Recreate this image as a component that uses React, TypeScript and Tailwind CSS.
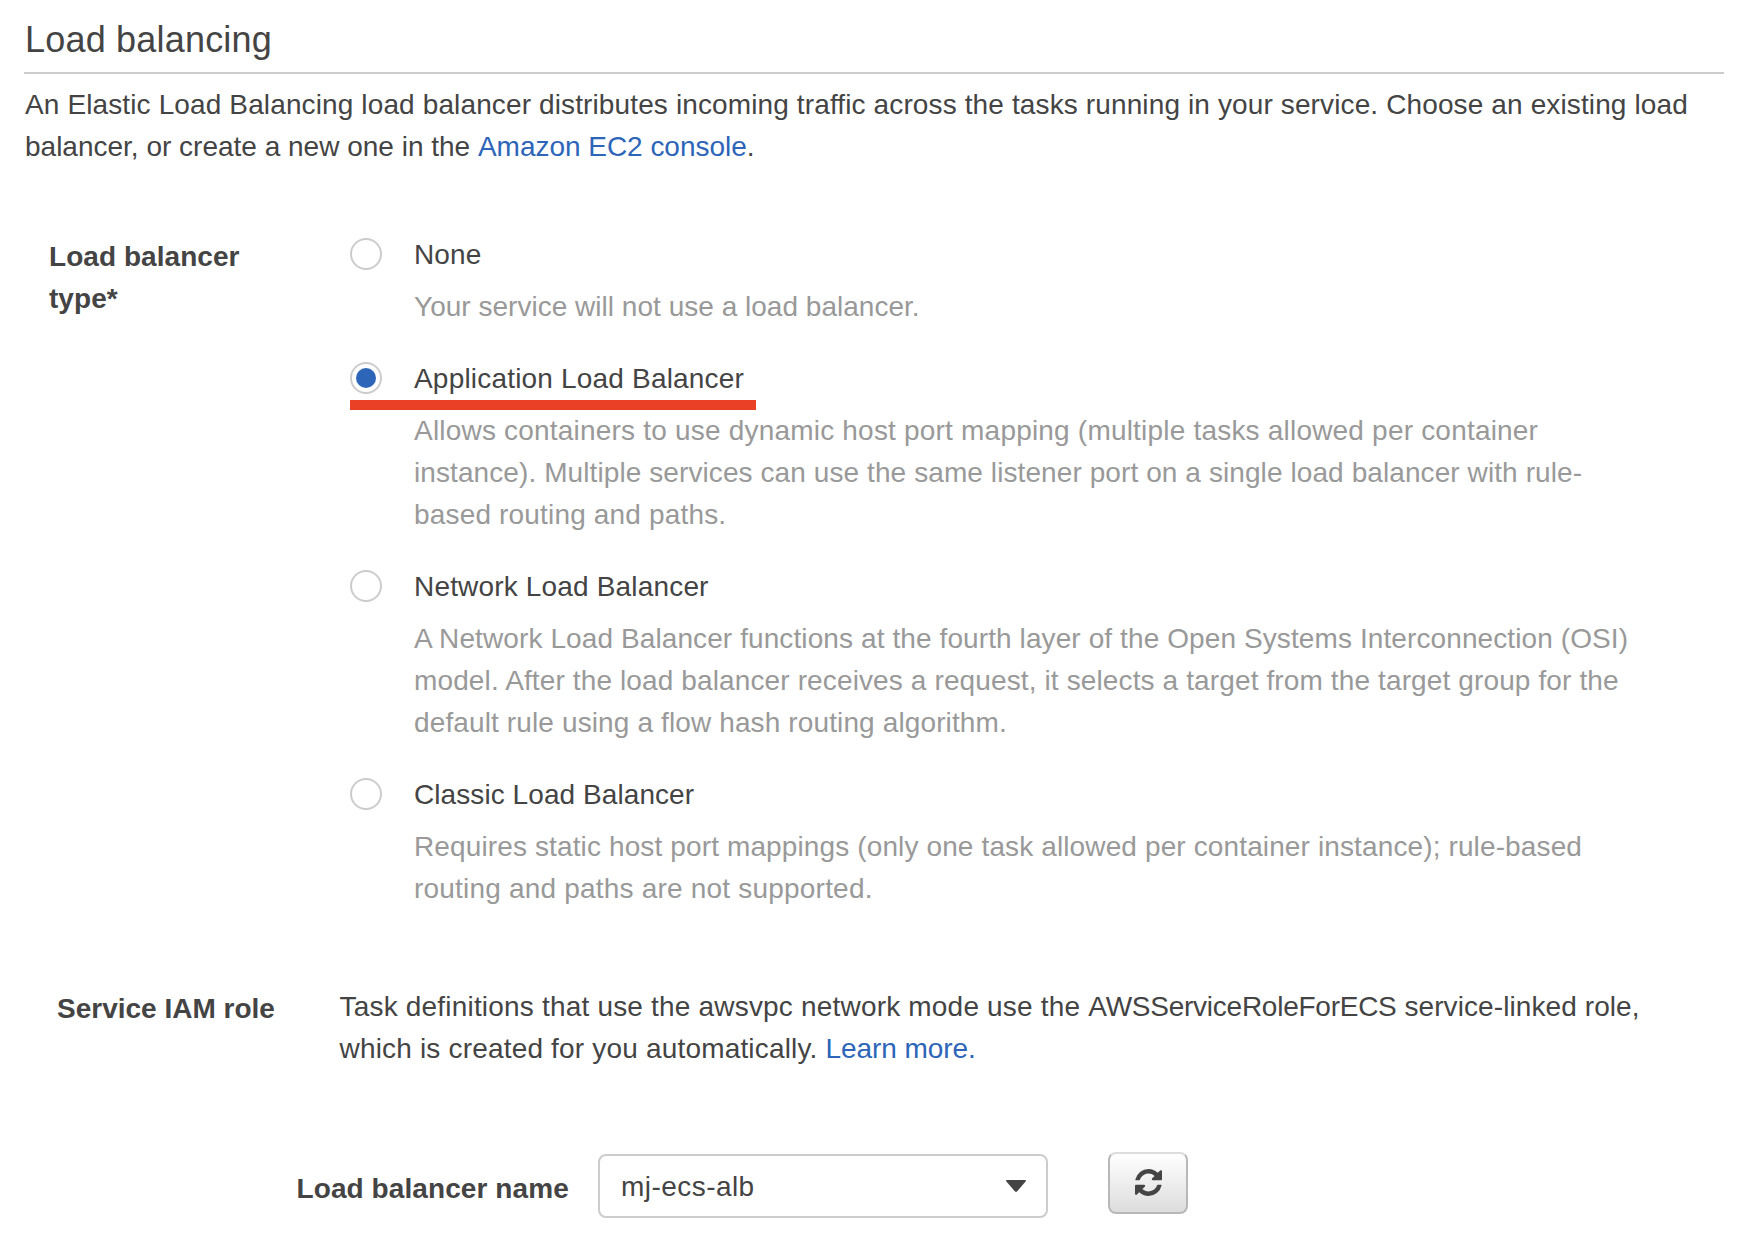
import React from "react";

type TextLine = { text: string; tracking?: string };
type Option = { name: TextLine; lines: TextLine[]; checked?: boolean };

const OPTIONS: Option[] = [
  {
    name: { text: "None" },
    lines: [{ text: "Your service will not use a load balancer.", tracking: "tracking-[0.02px]" }],
  },
  {
    name: { text: "Application Load Balancer", tracking: "tracking-[0.19px]" },
    checked: true,
    lines: [
      {
        text: "Allows containers to use dynamic host port mapping (multiple tasks allowed per container",
        tracking: "tracking-[0.2px]",
      },
      {
        text: "instance). Multiple services can use the same listener port on a single load balancer with rule-",
        tracking: "tracking-[0.09px]",
      },
      { text: "based routing and paths.", tracking: "tracking-[0.17px]" },
    ],
  },
  {
    name: { text: "Network Load Balancer", tracking: "tracking-[0.17px]" },
    lines: [
      {
        text: "A Network Load Balancer functions at the fourth layer of the Open Systems Interconnection (OSI)",
        tracking: "tracking-[0.1px]",
      },
      { text: "model. After the load balancer receives a request, it selects a target from the target group for the" },
      { text: "default rule using a flow hash routing algorithm." },
    ],
  },
  {
    name: { text: "Classic Load Balancer", tracking: "tracking-[0.075px]" },
    lines: [
      { text: "Requires static host port mappings (only one task allowed per container instance); rule-based" },
      { text: "routing and paths are not supported.", tracking: "tracking-[0.2px]" },
    ],
  },
];

function Radio({ checked }: { checked?: boolean }) {
  return (
    <span className="flex size-8 shrink-0 items-center justify-center rounded-full border-2 border-[#ccc] bg-white">
      {checked && <span className="size-5 rounded-full bg-[#2d65b8]" />}
    </span>
  );
}

function OptionRow({ name, lines, checked }: Option) {
  return (
    <div>
      <label className="relative flex h-[42px] items-center gap-8">
        <Radio checked={checked} />
        <span className={`pt-0.5 ${name.tracking ?? ""}`}>{name.text}</span>
        {checked && <span className="absolute top-[43px] left-0 h-2.5 w-[406px] bg-[#ea4025]" />}
      </label>
      <div className="mt-[11px] -mb-px pl-16 text-[#999]">
        {lines.map((line) => (
          <div key={line.text} className={line.tracking}>
            {line.text}
          </div>
        ))}
      </div>
    </div>
  );
}

function RefreshIcon() {
  return (
    <svg className="mb-0.5 size-[27px]" viewBox="128 128 1536 1536" fill="#444">
      <path d="M1639 1056q0 5-1 7-64 268-268 434.5t-478 166.5q-146 0-282.5-55t-243.5-157l-129 129q-19 19-45 19t-45-19-19-45v-448q0-26 19-45t45-19h448q26 0 45 19t19 45-19 45l-137 137q71 66 161 102t187 36q134 0 250-65t186-179q11-17 53-117 8-23 30-23h192q13 0 22.5 9.5t9.5 22.5zm25-800v448q0 26-19 45t-45 19h-448q-26 0-45-19t-19-45 19-45l138-138q-148-137-349-137-134 0-250 65t-186 179q-11 17-53 117-8 23-30 23h-199q-13 0-22.5-9.5t-9.5-22.5v-7q65-268 270-434.5t480-166.5q146 0 284 55.5t245 156.5l130-129q19-19 45-19t45 19 19 45z" />
    </svg>
  );
}

export default function App() {
  return (
    <div className="h-[1250px] w-[1750px] overflow-hidden bg-white font-['Liberation_Sans',Arial,sans-serif] text-[28px] leading-[42px] tracking-[0.125px] whitespace-nowrap text-[#444]">
      <h1 className="ml-6 h-[74px] w-[1700px] border-b-2 border-[#ccc] pt-2.5 pl-px text-[36px] leading-[60px] tracking-[0.2px]">
        Load balancing
      </h1>
      <p className="mt-2.5 pl-[25px]">
        An Elastic Load Balancing load balancer distributes incoming traffic across the tasks running in your service. Choose an existing load
        <br />
        <span className="tracking-[0px]">balancer, or create a new one in the </span>
        <a className="tracking-[-0.03px] text-[#2d65b8]">Amazon EC2 console</a>.
      </p>

      <div className="mt-[65px] flex pl-[49px]">
        <div className="w-[301px] pt-[3px] font-bold tracking-[0.05px]">
          Load balancer
          <br />
          type*
        </div>
        <div className="flex flex-col gap-[30px]">
          {OPTIONS.map((option) => (
            <OptionRow key={option.name.text} {...option} />
          ))}
        </div>
      </div>

      <div className="mt-[77px] flex pl-[57px]">
        <div className="w-[282.5px] pt-0.5 font-bold tracking-[0px]">Service IAM role</div>
        <p>
          <span className="tracking-[0.19px]">
            Task definitions that use the awsvpc network mode use the{" "}
          </span>
          <span className="tracking-[-0.25px]">AWSServiceRoleForECS</span>
          <span className="tracking-[0.09px]"> service-linked role,</span>
          <br />
          <span className="tracking-[0.18px]">which is created for you automatically. </span>
          <a className="tracking-[-0.07px] text-[#2d65b8]">Learn more.</a>
        </p>
      </div>

      <div className="mt-[82px] flex items-start pl-[296.5px]">
        <div className="w-[301.5px] pt-4 font-bold tracking-[0.09px]">Load balancer name</div>
        <div className="mt-0.5 flex h-16 w-[450px] items-center justify-between rounded-lg border-2 border-[#ccc] pr-5 pl-[21px]">
          <span className="pt-0.5 tracking-[0.45px]">mj-ecs-alb</span>
          <svg className="h-3 w-5" viewBox="0 0 20 12" fill="#444">
            <path d="M1 0h18q1.5.3.6 1.5L11 11.4q-1 .9-2 0L.4 1.5Q-.5.3 1 0Z" />
          </svg>
        </div>
        <button className="ml-[60px] flex h-[62px] w-20 items-center justify-center rounded-lg border-2 border-[#b8b8b8] border-t-[#ddd] bg-linear-to-b from-white to-[#ddd]">
          <RefreshIcon />
        </button>
      </div>
    </div>
  );
}
